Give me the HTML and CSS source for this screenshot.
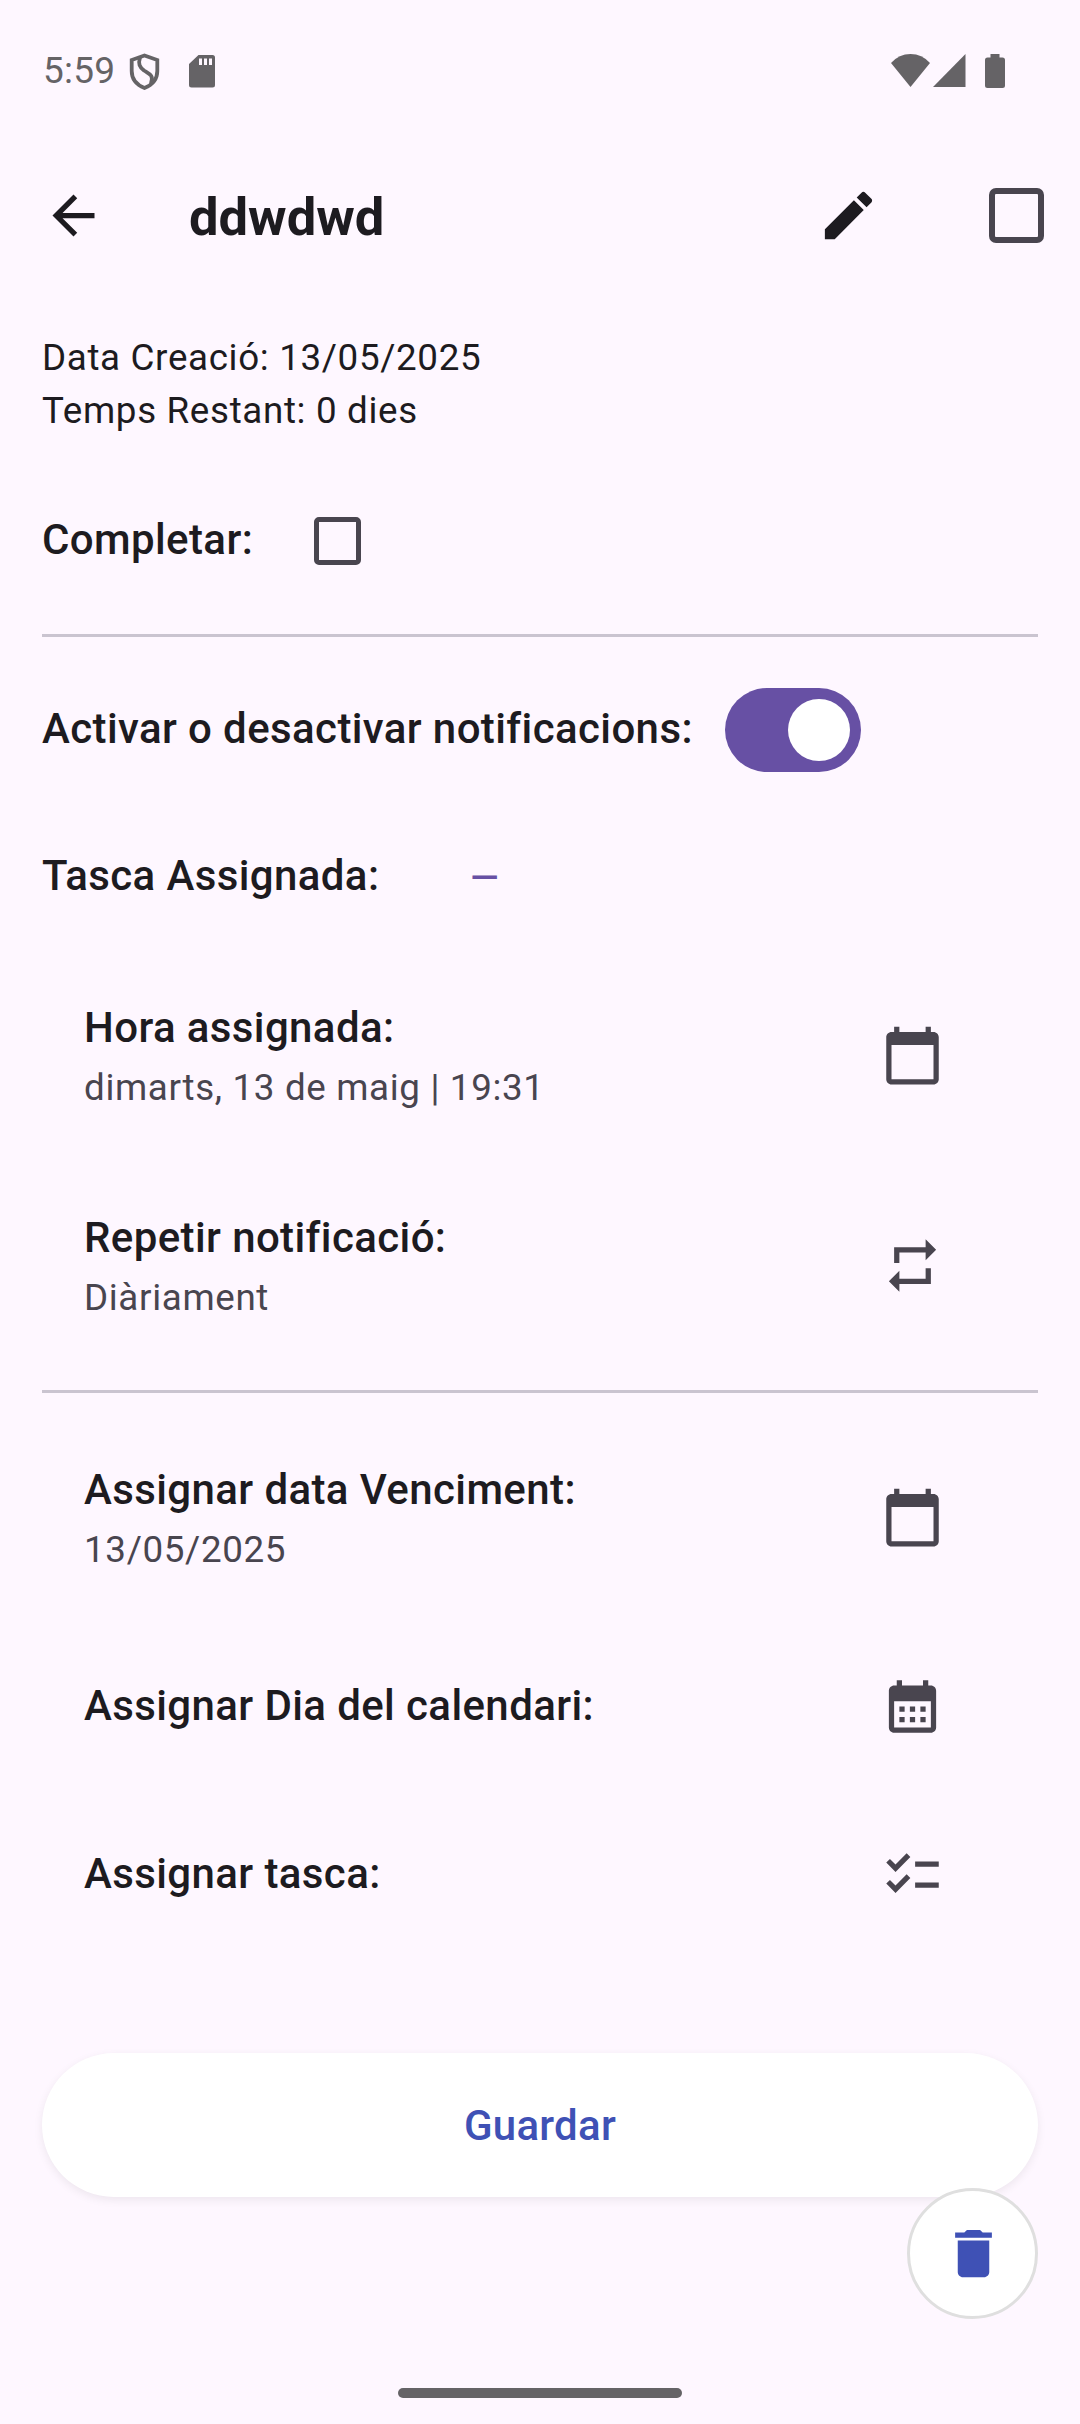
FILE: index.html
```html
<!DOCTYPE html>
<html lang="ca">
<head>
<meta charset="utf-8">
<title>ddwdwd</title>
<link rel="stylesheet" href="styles.css">
</head>
<body>
<div class="screen">
  <div class="status">
    <span class="clock">5:59</span>
    <svg class="shield" width="32" height="37" viewBox="0 0 32 37"><path d="M16.500 2.500 29.300 7v11C29.300 26 24 32 16.500 35 9 32 3.700 26 3.700 18V7Z"/><path d="M12 4.500C10 11 11.500 14 16 17.500 21.500 21 26 22 23 30.500"/></svg>
    <svg class="sd" width="26" height="33" viewBox="0 0 26 33"><path fill-rule="evenodd" d="M9.500 0H23.500Q26 0 26 2.500V30Q26 32.500 23.500 32.500H2.500Q0 32.500 0 30V9ZM10 3.500V10H13V3.500ZM15 3.500V10H18V3.500ZM20 3.500V10H23V3.500Z"/></svg>
    <div class="signals">
      <svg width="39" height="33" viewBox="0 0 39 33"><path d="M0 9Q8 0 19.500 0T39 9L19.500 33Z"/></svg>
      <svg width="33" height="33" viewBox="0 0 33 33"><path d="M0 33 32.500 0V33Z"/></svg>
      <svg class="battery" width="20" height="34" viewBox="0 0 20 34"><path d="M5.500 0H14.500V3.500H17.500Q20 3.500 20 6V31.500Q20 34 17.500 34H2.500Q0 34 0 31.500V6Q0 3.500 2.500 3.500H5.500Z"/></svg>
    </div>
  </div>

  <header class="bar">
    <svg class="icon dark" viewBox="0 0 24 24"><path d="M20 11H7.830l5.590-5.590L12 4l-8 8 8 8 1.410-1.410L7.830 13H20v-2z"/></svg>
    <h1 class="title">ddwdwd</h1>
    <svg class="icon dark" viewBox="0 0 24 24"><path d="M3 17.250V21h3.750L17.810 9.940l-3.750-3.750L3 17.250zM20.710 7.040c.39-.39.39-1.020 0-1.410l-2.340-2.340c-.39-.39-1.020-.39-1.410 0l-1.830 1.830 3.750 3.750 1.830-1.830z"/></svg>
    <span class="check check-large"></span>
  </header>

  <main class="content">
    <div class="meta">
      <p>Data Creació: 13/05/2025</p>
      <p>Temps Restant: 0 dies</p>
    </div>
    <div class="row complete">
      <span class="label">Completar:</span>
      <span class="check"></span>
    </div>
    <hr class="divider">
    <div class="row notify">
      <span class="label">Activar o desactivar notificacions:</span>
      <span class="switch"><span class="thumb"></span></span>
    </div>
    <div class="row task">
      <span class="label">Tasca Assignada:</span>
      <span class="dash">—</span>
    </div>

    <div class="list">
      <div class="item two">
        <div><p class="label">Hora assignada:</p><p class="sub">dimarts, 13 de maig | 19:31</p></div>
        <svg class="icon" viewBox="0 0 24 24"><path d="M20 3h-1V1h-2v2H7V1H5v2H4c-1.100 0-2 .9-2 2v16c0 1.100.9 2 2 2h16c1.100 0 2-.9 2-2V5c0-1.100-.9-2-2-2zm0 18H4V8h16v13z"/></svg>
      </div>
      <div class="item two">
        <div><p class="label">Repetir notificació:</p><p class="sub">Diàriament</p></div>
        <svg class="icon" viewBox="0 0 24 24"><path d="M7 7h10v3l4-4-4-4v3H5v6h2V7zm10 10H7v-3l-4 4 4 4v-3h12v-6h-2v4z"/></svg>
      </div>
    </div>
    <hr class="divider">
    <div class="list">
      <div class="item two">
        <div><p class="label">Assignar data Venciment:</p><p class="sub">13/05/2025</p></div>
        <svg class="icon" viewBox="0 0 24 24"><path d="M20 3h-1V1h-2v2H7V1H5v2H4c-1.100 0-2 .9-2 2v16c0 1.100.9 2 2 2h16c1.100 0 2-.9 2-2V5c0-1.100-.9-2-2-2zm0 18H4V8h16v13z"/></svg>
      </div>
      <div class="item">
        <p class="label">Assignar Dia del calendari:</p>
        <svg class="icon" viewBox="0 0 24 24"><path d="M19 4h-1V2h-2v2H8V2H6v2H5c-1.110 0-2 .9-2 2v14c0 1.100.89 2 2 2h14c1.100 0 2-.9 2-2V6c0-1.100-.9-2-2-2zm0 16H5V10h14v10zM9 14H7v-2h2v2zm4 0h-2v-2h2v2zm4 0h-2v-2h2v2zm-8 4H7v-2h2v2zm4 0h-2v-2h2v2zm4 0h-2v-2h2v2z"/></svg>
      </div>
      <div class="item">
        <p class="label">Assignar tasca:</p>
        <svg class="icon" viewBox="0 0 24 24"><path d="M22 7h-9v2h9V7zM22 15h-9v2h9v-2zM5.540 11 2 7.460l1.410-1.410 2.120 2.120 4.240-4.240 1.410 1.410L5.540 11zM5.540 19 2 15.460l1.410-1.410 2.120 2.120 4.240-4.240 1.410 1.410L5.540 19z"/></svg>
      </div>
    </div>
    <button class="save">Guardar</button>
  </main>
  <button class="fab" aria-label="Eliminar"><svg class="icon" viewBox="0 0 24 24"><path d="M6 19c0 1.100.9 2 2 2h8c1.100 0 2-.9 2-2V7H6v12zM19 4h-3.500l-1-1h-5l-1 1H5v2h14V4z"/></svg></button>
  <div class="gesture"></div>
</div>
</body>
</html>
```

FILE: styles.css
```css
* { box-sizing: border-box; }
body { margin: 0; background: #fef7ff; }
p, h1 { margin: 0; }
svg { display: block; flex: none; }
.screen {
  position: relative;
  display: flex;
  flex-direction: column;
  width: 1080px;
  height: 2424px;
  overflow: hidden;
  font-family: Roboto, sans-serif;
  color: #1d1b20;
}
.status {
  display: flex;
  align-items: flex-start;
  height: 142px;
  padding: 54px 75px 0 43px;
  color: #656366;
}
.status svg { fill: #656366; }
.clock {
  width: 85px;
  margin-top: -5px;
  font-size: 37px;
  line-height: 43px;
  letter-spacing: 0.2px;
}
.status .shield { fill: none; stroke: #656366; stroke-width: 3.8; margin-top: -1px; }
.sd { margin: 1px 0 0 29px; }
.signals { display: flex; gap: 3px; margin-left: auto; }
.battery { margin-left: 16px; }
.bar {
  display: flex;
  align-items: center;
  height: 147px;
  padding: 0 36px 0 42px;
}
.icon { width: 63px; height: 63px; fill: #49454f; }
.icon.dark { fill: #1d1b20; }
.title {
  flex: 1;
  margin-left: 84px;
  padding-top: 4px;
  font-size: 52.5px;
  line-height: 63px;
  font-weight: 700;
}
.check {
  width: 47px;
  height: 48px;
  border: 5.25px solid #49454f;
  border-radius: 5px;
}
.check-large {
  width: 55px;
  height: 55px;
  margin-left: 109px;
  border-width: 6px;
  border-radius: 7px;
}
.content { display: flex; flex-direction: column; padding: 43px 42px 0; }
.meta {
  font-size: 36.75px;
  line-height: 52.5px;
  letter-spacing: 0.66px;
}
.row { display: flex; align-items: center; }
.label {
  font-size: 42px;
  line-height: 63px;
  font-weight: 500;
  letter-spacing: 0.39px;
}
.row .label { padding-bottom: 3px; }
.complete { height: 126px; margin: 41px 0 30px; gap: 61px; }
.divider { width: 100%; height: 3px; margin: 0; border: 0; background: #cac4d0; }
.notify { height: 84px; margin-top: 51px; gap: 32px; }
.switch {
  display: flex;
  align-items: center;
  justify-content: flex-end;
  width: 136px;
  height: 84px;
  padding-right: 11px;
  border-radius: 42px;
  background: #6750a4;
}
.thumb { width: 62px; height: 62px; border-radius: 50%; background: #fff; }
.task { height: 126px; margin-top: 42px; gap: 91px; }
.dash { font-size: 36.75px; font-weight: 500; color: #6750a4; }
.list { display: flex; flex-direction: column; gap: 21px; padding: 21px 94.5px 30px 42px; }
.item { display: flex; align-items: center; justify-content: space-between; height: 147px; }
.item .label { padding-bottom: 2px; }
.item.two { height: 189px; }
.item.two .label { margin-top: -1px; padding-bottom: 3px; }
.sub {
  font-size: 36.75px;
  line-height: 52.5px;
  letter-spacing: 0.66px;
  color: #49454f;
}
.divider + .list { padding: 30px 94.5px 29px 42px; }
.save {
  height: 144px;
  margin-top: 76px;
  border: 0;
  border-radius: 72px;
  background: #fff;
  box-shadow: 0 3px 10px rgba(0, 0, 0, 0.07);
  font: 500 42px/63px Roboto, sans-serif;
  letter-spacing: 0.26px;
  color: #3f51b5;
}
.fab {
  position: absolute;
  left: 907px;
  top: 2188px;
  display: flex;
  align-items: center;
  justify-content: center;
  width: 131px;
  height: 131px;
  padding: 0 0 0 1px;
  border: 3px solid #dfdfdf;
  border-radius: 50%;
  background: #fff;
}
.fab .icon { fill: #3f51b5; }
.gesture {
  width: 284px;
  height: 10px;
  margin: auto auto 26px;
  border-radius: 5px;
  background: #656366;
}
```
